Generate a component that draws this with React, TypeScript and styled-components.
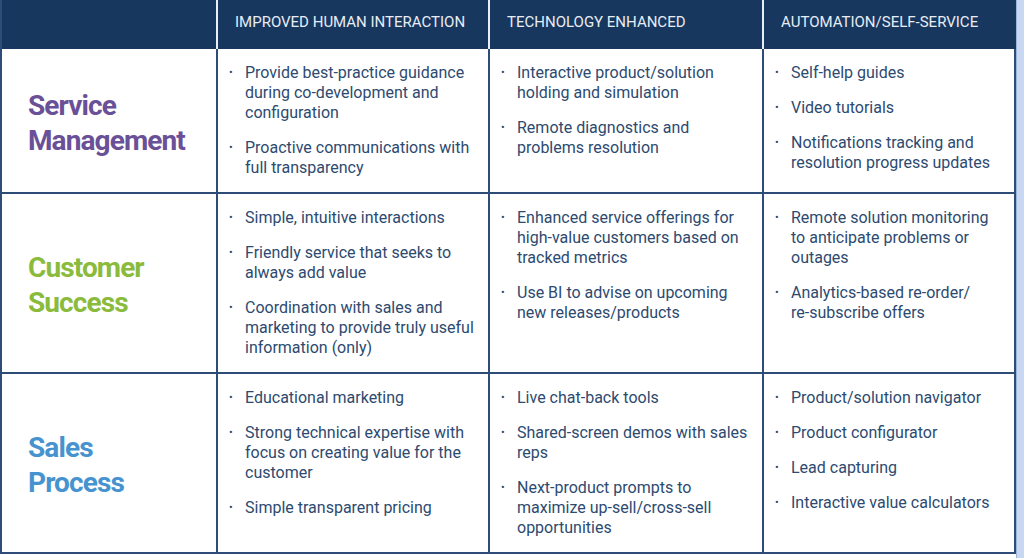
import React from "react";
import styled, { createGlobalStyle } from "styled-components";

const GlobalStyle = createGlobalStyle`
  html, body { margin: 0; padding: 0; background: #ffffff; }
  body { font-family: Roboto, "Noto Sans", sans-serif; }
  * { box-sizing: border-box; }
`;

const NAVY = "#17375f";
const LINE = "#2e4c78";
const TEXT = "#2d4a6f";

const Page = styled.div`
  display: flex;
  width: 1024px;
  height: 558px;
  background: #ffffff;
`;

const Table = styled.div`
  display: grid;
  grid-template-columns: 216px 272px 274px 252px;
  grid-template-rows: 49px 145px 180px 180px;
  width: 1016px;
  align-self: flex-start;
  border-left: 2px solid ${LINE};
`;

const Strip = styled.div`
  flex: 1;
  height: 558px;
  background: #c8d8f3;
  border-left: 1px solid #9db4d8;
`;

const HeadCell = styled.div<{ $last?: boolean }>`
  background: ${NAVY};
  color: #e8edf5;
  font-family: Roboto, sans-serif;
  font-size: 15px;
  letter-spacing: 0;
  text-transform: uppercase;
  padding: 13px 0 0 17px;
  border-right: 2px solid ${(p) => (p.$last ? NAVY : "#e9eef6")};
  white-space: nowrap;
`;

const LabelCell = styled.div<{ $color: string }>`
  display: flex;
  align-items: center;
  padding: 4px 0 0 26px;
  border-right: 2px solid ${LINE};
  border-bottom: 2px solid ${LINE};
  color: ${(p) => p.$color};
  font-family: Roboto, sans-serif;
  font-weight: 700;
  font-size: 28px;
  line-height: 35px;
  letter-spacing: -0.9px;
`;

const Cell = styled.ul`
  margin: 0;
  list-style: none;
  padding: 14px 11px 0 11px;
  display: flex;
  flex-direction: column;
  gap: 15px;
  border-right: 2px solid ${LINE};
  border-bottom: 2px solid ${LINE};
`;

const Item = styled.li`
  display: grid;
  grid-template-columns: 16px 1fr;
  color: ${TEXT};
  font-family: Roboto, sans-serif;
  font-size: 16px;
  line-height: 20px;
  &::before {
    content: "•";
    font-size: 11px;
    color: ${TEXT};
  }
`;

const rows = [
  {
    label: ["Service", "Management"],
    color: "#6a5097",
    cols: [
      [
        "Provide best-practice guidance during co-development and configuration",
        "Proactive communications with full transparency",
      ],
      [
        "Interactive product/solution holding and simulation",
        "Remote diagnostics and problems resolution",
      ],
      [
        "Self-help guides",
        "Video tutorials",
        "Notifications tracking and resolution progress updates",
      ],
    ],
  },
  {
    label: ["Customer", "Success"],
    color: "#8bbb3c",
    cols: [
      [
        "Simple, intuitive interactions",
        "Friendly service that seeks to always add value",
        "Coordination with sales and marketing to provide truly useful information (only)",
      ],
      [
        "Enhanced service offerings for high-value customers based on tracked metrics",
        "Use BI to advise on upcoming new releases/products",
      ],
      [
        "Remote solution monitoring to anticipate problems or outages",
        "Analytics-based re-order/\nre-subscribe offers",
      ],
    ],
  },
  {
    label: ["Sales", "Process"],
    color: "#4693cf",
    cols: [
      [
        "Educational marketing",
        "Strong technical expertise with focus on creating value for the customer",
        "Simple transparent pricing",
      ],
      [
        "Live chat-back tools",
        "Shared-screen demos with sales reps",
        "Next-product prompts to maximize up-sell/cross-sell opportunities",
      ],
      [
        "Product/solution navigator",
        "Product configurator",
        "Lead capturing",
        "Interactive value calculators",
      ],
    ],
  },
];

const headers = ["Improved Human Interaction", "Technology Enhanced", "Automation/Self-Service"];

export default function App() {
  return (
    <>
      <GlobalStyle />
      <Page>
        <Table>
          <HeadCell />
          {headers.map((h, i) => (
            <HeadCell key={h} $last={i === headers.length - 1}>
              {h}
            </HeadCell>
          ))}
          {rows.map((r) => (
            <React.Fragment key={r.label.join(" ")}>
              <LabelCell $color={r.color}>
                <div>
                  {r.label[0]}
                  <br />
                  {r.label[1]}
                </div>
              </LabelCell>
              {r.cols.map((c, ci) => (
                <Cell key={ci}>
                  {c.map((t) => (
                    <Item key={t}>
                      <span>
                        {t.split("\n").map((part, pi) => (
                          <React.Fragment key={pi}>
                            {pi > 0 && <br />}
                            {part}
                          </React.Fragment>
                        ))}
                      </span>
                    </Item>
                  ))}
                </Cell>
              ))}
            </React.Fragment>
          ))}
        </Table>
        <Strip />
      </Page>
    </>
  );
}
